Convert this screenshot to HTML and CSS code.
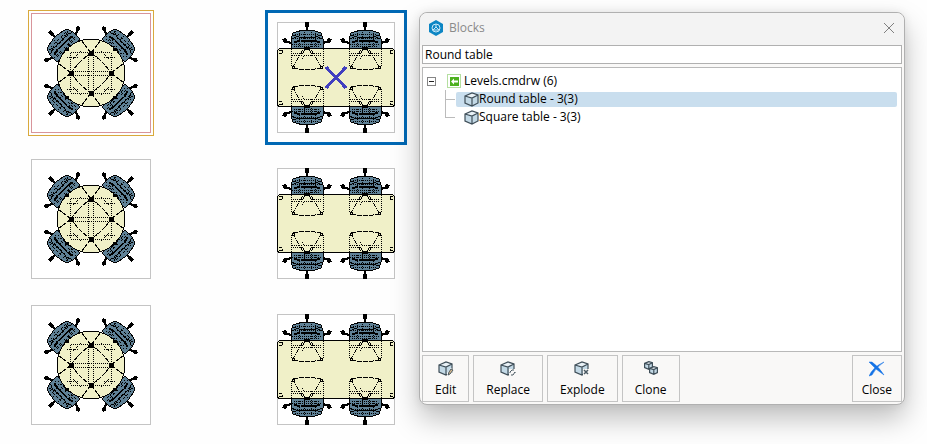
FILE: index.html
```html
<!DOCTYPE html>
<html lang="en">
<head>
    <meta charset="utf-8">
    <title>Blocks</title>
    <link rel="stylesheet" href="styles.css">
</head>
<body>
    <!-- shared drawing parts -->
    <svg class="defs" width="0" height="0" aria-hidden="true">
        <defs>
            <!-- chair back, castor at 0,0, seat goes down -->
            <g id="chair">
                <path class="arm" d="M0 2V9M-16 21L-22 19M16 21L22 19"/>
                <path class="solid" d="M-2 0h4v5h-4zM-25 17l4-1 2 4-4 1zM25 17l-4-1-2 4 4 1z"/>
                <path class="back" d="M-8 9Q0 7 8 9L14 11L16 17V27H-16V17L-14 11Z"/>
                <path class="line" d="M-14 13L-8 15H8L14 13M-15 17L-9 14M15 17L9 14"/>
                <path class="dots" d="M-12 12H12M-14 16H14M-15 22H15M-13 24H13M-8 9V25M8 9V25M-3 10V25M4 10V25"/>
                <path class="thick" d="M-6 19H7M-13 20L-7 19M13 20L7 19"/>
            </g>
            <!-- the part of the chair seen through the table top -->
            <g id="seat">
                <path class="solid" d="M-3 25H3V28H-3z"/>
                <path class="dots" d="M-15.5 27V45M16.500 27V45M-14 31.500H-5M5 31.500H14M-15 33.500H-7M7 33.500H15M-5 36.500L-3 33.500H4L6 36.500M-4 28L-14 44M4 28L14 44M-2 28L-7 35M2 28L7 35"/>
                <path class="dash" d="M-14 46Q0 49 14 46"/>
                <path class="castor" d="M-15 44h2v2h-2zM13 44h2v2h-2z"/>
            </g>
            <g id="round-table">
                <g transform="translate(60 60)">
                    <use href="#chair" transform="rotate(45) translate(0 -59)"/>
                    <use href="#chair" transform="rotate(135) translate(0 -59)"/>
                    <use href="#chair" transform="rotate(225) translate(0 -59)"/>
                    <use href="#chair" transform="rotate(315) translate(0 -59)"/>
                    <circle class="top" r="34"/>
                    <path class="dots" d="M-20 -1.500H20M-20 2.500H20M-2.500 -20V20M2.500 -20V20M-20.500 -20V20M20.500 -20V20M-20 -20.500H20M-20 20.500H20M-18 -14L-10 -22M18 -14L10 -22M-18 14L-10 22M18 14L10 22M-24 -16H-12M24 -16H12M-24 16H-12M24 16H12"/>
                    <path class="dash" d="M-20 0Q-12 -12 0 -20Q12 -12 20 0Q12 12 0 20Q-12 12 -20 0M-20 0L-33 -10M-20 0L-33 10M20 0L33 -10M20 0L33 10M0 -20L-10 -33M0 -20L10 -33M0 20L-10 33M0 20L10 33"/>
                    <path class="solid" d="M-22 -2h5v5h-5zM18 -2h5v5h-5zM-2 -22h5v5h-5zM-2 18h5v5h-5zM-26 -25h4v3h-4zM22 -25h4v3h-4zM-26 23h4v3h-4zM22 23h4v3h-4z"/>
                </g>
            </g>
            <g id="square-table">
                <use href="#chair" transform="translate(30 0)"/>
                <use href="#chair" transform="translate(88 0)"/>
                <use href="#chair" transform="translate(30 111) scale(1 -1)"/>
                <use href="#chair" transform="translate(88 111) scale(1 -1)"/>
                <rect class="top" x=".5" y="26.500" width="117" height="58" rx="3"/>
                <use href="#seat" transform="translate(30 0)"/>
                <use href="#seat" transform="translate(88 0)"/>
                <use href="#seat" transform="translate(30 111) scale(1 -1)"/>
                <use href="#seat" transform="translate(88 111) scale(1 -1)"/>
                <path class="dash" d="M2 28.500h3v3h-3M116 28.500h-3v3h3M2 82.500h3v-3h-3M116 82.500h-3v-3h3"/>
            </g>
            <g id="cube">
                <path class="cube-face" d="M1 4L8 1L14 3V11L8 14L1 11Z"/>
                <path class="cube-top" d="M1 4L8 1L14 3L8 6Z"/>
                <path class="cube-edge" d="M1 4L8 1L14 3V11L8 14L1 11ZM1 4L8 6L14 3M8 6V14"/>
            </g>
        </defs>
    </svg>

    <main class="workspace">
        <section class="drawing" aria-label="Levels.cmdrw">
            <svg class="block round current" viewBox="1 1 118 118"><use href="#round-table"/></svg>
            <svg class="block square picked" viewBox="1 1 116 109">
                <use href="#square-table"/>
                <path class="mark" d="M49 45L69 66M69 45L49 66"/>
            </svg>
            <svg class="block round" viewBox="1 1 118 118"><use href="#round-table"/></svg>
            <svg class="block square" viewBox="1 1 116 109"><use href="#square-table"/></svg>
            <svg class="block round" viewBox="1 1 118 118"><use href="#round-table"/></svg>
            <svg class="block square" viewBox="1 1 116 109"><use href="#square-table"/></svg>
        </section>

        <section class="dialog" role="dialog" aria-labelledby="dialogTitle">
            <header class="titlebar">
                <svg class="logo" viewBox="0 0 16 16">
                    <path d="M8 0L15 4V12L8 16L1 12V4Z" fill="#0d86c4"/>
                    <circle cx="8" cy="8" r="4" fill="none" stroke="#c9e8f8"/>
                    <path d="M8 4V7M8 7L5 10M8 7L11 10M5 10H11" fill="none" stroke="#c9e8f8"/>
                </svg>
                <h1 id="dialogTitle">Blocks</h1>
                <button class="close-icon" type="button" aria-label="Close window">
                    <svg viewBox="0 0 12 12"><path d="M1 1L11 11M11 1L1 11" stroke="#808080" fill="none"/></svg>
                </button>
            </header>

            <input class="name" type="text" value="Round table" aria-label="Block name">

            <ul class="tree">
                <li>
                    <div class="row">
                        <button class="toggle" type="button" aria-label="Collapse"></button>
                        <svg class="file-icon" viewBox="0 0 14 14">
                            <rect x=".5" y=".5" width="13" height="13" fill="#fff" stroke="#b5dfa0"/>
                            <rect x="3" y="3" width="9" height="9" fill="#4cb01e"/>
                            <path d="M4 7.500L7 4.500V6.500H11V8.500H7V10.500Z" fill="#fff"/>
                        </svg>
                        <span>Levels.cmdrw (6)</span>
                    </div>
                    <ul class="children">
                        <li class="row">
                            <span class="branch"></span>
                            <a class="item selected" href="#round"><svg viewBox="0 0 15 15"><use href="#cube"/></svg>Round table - 3(3)</a>
                        </li>
                        <li class="row">
                            <span class="branch last"></span>
                            <a class="item" href="#square"><svg viewBox="0 0 15 15"><use href="#cube"/></svg>Square table - 3(3)</a>
                        </li>
                    </ul>
                </li>
            </ul>

            <footer class="actions">
                <button type="button">
                    <svg viewBox="0 0 16 16"><use href="#cube"/><path d="M9 15V12L13 7L16 9L12 14Z" fill="#f9f8f7"/><path d="M10 14L11 11L13 8L15 9L12 13Z" fill="#d9b98a" stroke="#4b5a63"/></svg>
                    Edit
                </button>
                <button type="button">
                    <svg viewBox="0 0 16 16"><use href="#cube"/><path d="M9 8H16V16H9Z" fill="#f9f8f7"/><path d="M10 11L12 9H14M15 11L13 14H11M10 11V12M15 12V11" fill="none" stroke="#4b5a63"/></svg>
                    Replace
                </button>
                <button type="button">
                    <svg viewBox="0 0 16 16"><use href="#cube"/><path d="M9 8H16V16H9Z" fill="#f9f8f7"/><path d="M10 9L14 13M14 9L10 13" fill="none" stroke="#4b5a63" stroke-width="1.500"/></svg>
                    Explode
                </button>
                <button type="button">
                    <svg viewBox="0 0 16 16"><use href="#cube" transform="translate(1 0) scale(.6)"/><use href="#cube" transform="translate(6 5) scale(.6)"/></svg>
                    Clone
                </button>
                <button class="close" type="button">
                    <svg viewBox="0 0 16 16"><path d="M0 1L3 1Q10 6 15 14Q7 9 0 1ZM15 1Q7 6 3 14L0 15Q4 6 15 1Z" fill="#1473e6" stroke="#1473e6" stroke-width=".5"/></svg>
                    Close
                </button>
            </footer>
        </section>
    </main>
</body>
</html>
```

FILE: styles.css
```css
* {
    box-sizing: border-box;
}

body {
    margin: 0;
    background-color: #fefefe;
    color: #000;
    font-family: "Open Sans", "Noto Sans", sans-serif;
    font-size: 12px;
    line-height: 16px;
}

ul {
    list-style: none;
    margin: 0;
    padding: 0;
}

button,
input {
    font: inherit;
    color: inherit;
}

.defs {
    position: absolute;
}

.workspace {
    display: flex;
    min-height: 100vh;
}

/* drawing area */
.drawing {
    display: grid;
    grid-template-columns: 120px 118px;
    column-gap: 126px;
    row-gap: 26px;
    align-content: start;
    align-items: end;
    flex: none;
    padding: 13px 24px 13px 31px;
}

.block {
    display: block;
    width: 100%;
    background-color: #fff;
    border: 1px solid #c4c4c4;
    shape-rendering: crispEdges;
    overflow: visible;
}

.block.round {
    height: 120px;
}

.block.square {
    height: 111px;
}

.block.current {
    border-color: #d8959b;
    outline: 1px solid #d9a93c;
    outline-offset: 2px;
}

.block.picked {
    outline: 3px solid #0068b4;
    outline-offset: 9px;
}

.top {
    fill: #f0f0c8;
    stroke: #000;
}

.back {
    fill: #5f8196;
    stroke: #000;
}

.solid {
    fill: #000;
}

.castor {
    fill: #f0f0c8;
    stroke: #000;
}

.line,
.dots,
.dash,
.arm,
.thick {
    fill: none;
    stroke: #000;
}

.dots {
    stroke-dasharray: 1 1;
}

.dash {
    stroke-dasharray: 5 1;
}

.arm,
.thick {
    stroke-width: 2;
}

.mark {
    fill: none;
    stroke: #413fc0;
    stroke-width: 3;
}

/* dialog */
.dialog {
    display: flex;
    flex-direction: column;
    flex: 1;
    margin: 12px 22px 39px 0;
    padding: 0 2px 2px;
    background-color: #f9f8f7;
    border: 1px solid #b0b0b0;
    border-radius: 8px;
    box-shadow: 0 14px 28px rgba(0, 0, 0, 0.25), 0 0 10px rgba(0, 0, 0, 0.08);
}

.titlebar {
    display: flex;
    align-items: center;
    height: 32px;
    margin: 0 -2px;
    padding: 0 9px 2px 8px;
    background-color: #f3f3f3;
    border-radius: 8px 8px 0 0;
}

.logo {
    width: 16px;
    height: 16px;
}

.titlebar h1 {
    flex: 1;
    margin: 0 0 0 5px;
    color: #8a8a8a;
    font-size: 12px;
    font-weight: normal;
}

.close-icon {
    display: flex;
    padding: 0;
    border: none;
    background: none;
}

.close-icon svg {
    width: 12px;
    height: 12px;
}

.name {
    width: 100%;
    height: 19px;
    padding: 0 2px;
    border: 1px solid #b0b0b0;
    background-color: #fff;
}

.tree {
    flex: 1;
    margin: 3px 0;
    padding: 4px;
    border: 1px solid #b9b9b9;
    background-color: #fff;
}

.row {
    display: flex;
    align-items: center;
    height: 18px;
}

.toggle {
    width: 9px;
    height: 9px;
    padding: 0;
    border: 1px solid #858585;
    background: linear-gradient(#222, #222) center / 5px 1px no-repeat #fff;
}

.file-icon {
    width: 14px;
    height: 14px;
    margin: 0 3px 0 11px;
}

.children {
    padding-left: 18px;
}

.branch {
    width: 11px;
    height: 18px;
    background:
        linear-gradient(#bbb, #bbb) 0 9px / 10px 1px no-repeat,
        linear-gradient(#bbb, #bbb) 0 0 / 1px 100% no-repeat;
}

.branch.last {
    background-size: 10px 1px, 1px 9px;
}

.item {
    display: flex;
    align-items: center;
    flex: 1;
    height: 15px;
    padding-left: 8px;
    border-radius: 2px;
    color: inherit;
    text-decoration: none;
}

.item svg {
    width: 15px;
    height: 15px;
}

.item.selected {
    background-color: #c9deee;
}

.cube-face {
    fill: #c3d9e6;
}

.cube-top {
    fill: #e9f1f6;
}

.cube-edge {
    fill: none;
    stroke: #3f4e58;
    stroke-width: 1.2;
    vector-effect: non-scaling-stroke;
}

.actions {
    display: flex;
    gap: 4px;
}

.actions button {
    display: flex;
    flex-direction: column;
    align-items: center;
    justify-content: space-between;
    height: 47px;
    padding: 5px 12px 3px;
    border: 1px solid #c4c4c4;
    background-color: #f9f8f7;
}

.actions svg {
    width: 16px;
    height: 16px;
}

.actions .close {
    margin-left: auto;
    padding: 5px 9px 3px;
}
```
